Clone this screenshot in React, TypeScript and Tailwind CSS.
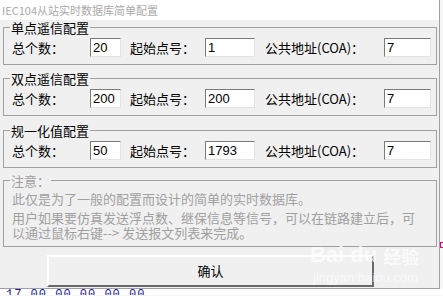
import React from 'react';

type Row = { total: string; start: string; coa: string };

const groups: { title: string; row: Row; gap: string }[] = [
  { title: '单点遥信配置', row: { total: '20', start: '1', coa: '7' }, gap: 'mt-0' },
  { title: '双点遥信配置', row: { total: '200', start: '200', coa: '7' }, gap: 'mt-[6px]' },
  { title: '规一化值配置', row: { total: '50', start: '1793', coa: '7' }, gap: 'mt-[7px]' },
];

function Field({ value, width }: { value: string; width: string }) {
  return (
    <div
      className={`${width} h-[19px] bg-white border border-t-[#7a7a7a] border-l-[#7a7a7a] border-b-[#e3e3e3] border-r-[#e3e3e3] pl-[2px] text-[13px] leading-[17px] text-black font-['Liberation_Sans',sans-serif]`}
    >
      {value}
    </div>
  );
}

export default function App() {
  return (
    <div className="relative w-[443px] h-[296px] overflow-hidden bg-[#f7f7f7] font-['Noto_Sans_CJK_SC',sans-serif]">
      <div className="w-[440px] border-r border-[#a0a0a0] flex flex-col">
        {/* Title */}
        <div className="h-[20px] bg-white pl-[2px] text-[11px] leading-[20px] text-[#aaaaaa] whitespace-nowrap">
          IEC104从站实时数据库简单配置
        </div>

        {/* Body */}
        <div className="h-[269px] bg-[#f0f0f0] pl-[3px] pr-[2px] flex flex-col border-b border-[#a0a0a0]">
          {groups.map((g) => (
            <fieldset key={g.title} className={`${g.gap} w-[434px] border border-[#a0a0a0]`}>
              <legend className="ml-[6px] px-[1px] text-[13px] leading-[15px] text-black">{g.title}</legend>
              <div className="mt-[3px] mb-[7px] h-[19px] flex items-center pl-[8px] text-[13px] text-black whitespace-nowrap">
                <span className="w-[78px]">总个数：</span>
                <Field value={g.row.total} width="w-[31px]" />
                <span className="ml-[9px] w-[75px]">起始点号：</span>
                <Field value={g.row.start} width="w-[50px]" />
                <span className="ml-[10px] w-[119px]">公共地址(COA)：</span>
                <Field value={g.row.coa} width="w-[47px]" />
              </div>
            </fieldset>
          ))}

          {/* Note */}
          <fieldset className="mt-[5px] w-[434px] border border-[#a0a0a0] text-[13px] text-[#a0a0a0]">
            <legend className="ml-[6px] px-[1px] leading-[15px]">注意：</legend>
            <div className="pl-[8px] pb-[6px] whitespace-nowrap">
              <p className="mt-[3px] leading-[15px]">此仅是为了一般的配置而设计的简单的实时数据库。</p>
              <p className="mt-[4px] leading-[15px]">用户如果要仿真发送浮点数、继保信息等信号，可以在链路建立后，可</p>
              <p className="leading-[15px]">以通过鼠标右键--&gt; 发送报文列表来完成。</p>
            </div>
          </fieldset>

          {/* Button */}
          <button className="mt-[8px] ml-[44px] w-[327px] h-[32px] bg-[#f0f0f0] border-2 border-t-white border-l-white border-b-[#696969] border-r-[#696969] text-[13px] text-black">
            确认
          </button>
        </div>
      </div>

      {/* window behind */}
      <div className="h-[6px] bg-white overflow-hidden pl-[6px]">
        <div className="-mt-[1px] text-[12px] leading-[14px] text-[#1a1aa0] font-['Liberation_Mono',monospace] tracking-[1px]">
          17 00 00 00 00 00
        </div>
      </div>

      {/* watermark */}
      <div className="absolute left-[310px] top-[243px] flex items-end gap-[6px] text-white/70 pointer-events-none">
        <span className="text-[22px] font-bold leading-[24px] font-['Liberation_Sans',sans-serif]">Bai du</span>
        <span className="text-[18px] font-bold leading-[22px]">经验</span>
      </div>
      <div className="absolute left-[313px] top-[268px] text-[13px] text-white/60 font-['Liberation_Sans',sans-serif] pointer-events-none">
        jingyan.baidu.com
      </div>
      <div className="absolute left-[440px] top-[242px] w-[3px] h-[6px] border-y border-l border-[#e0007a]" />
    </div>
  );
}
